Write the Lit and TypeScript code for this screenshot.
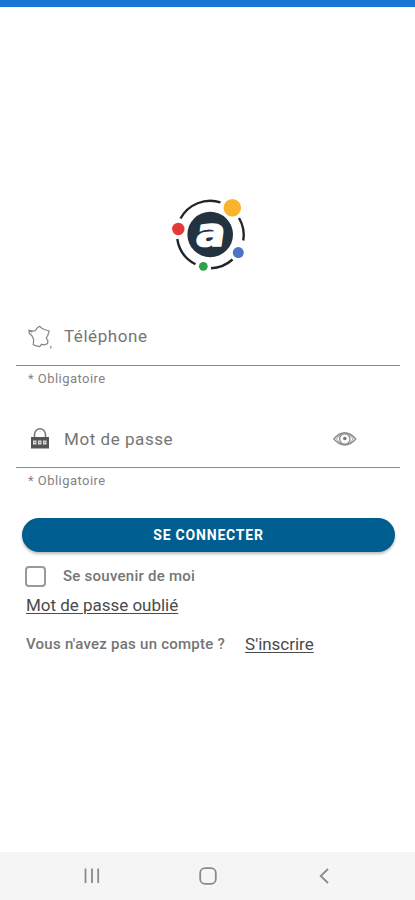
import { LitElement, html, css, svg } from "lit";
import { customElement } from "lit/decorators.js";

const logo = svg`
  <g fill="none" stroke="#22262a" stroke-width="2.4">
    <path d="M20.5 28.5A34 34 0 0 1 60.5 12.3"/>
    <path d="M79 28A34 34 0 0 1 83.3 50.5"/>
    <path d="M72.5 69.5A34 34 0 0 1 51 78.2"/>
    <path d="M35.5 74.3A34 34 0 0 1 17.3 49"/>
  </g>
  <circle cx="50.2" cy="44.5" r="22.8" fill="#22323f"/>
  <circle cx="72.3" cy="17.8" r="8.8" fill="#f8b52b"/>
  <circle cx="18.3" cy="39" r="6.2" fill="#e3393b"/>
  <circle cx="78.3" cy="62.6" r="5.5" fill="#4c74c4"/>
  <circle cx="43.3" cy="76.3" r="4.4" fill="#2ea14f"/>
  <text class="mark" transform="translate(34.6 55.8) skewX(-8) scale(1.12 1)">a</text>`;

@customElement("app-root")
export class AppRoot extends LitElement {
  static styles = css`
    :host { display: flex; flex-direction: column; height: 900px; background: #fff;
      font-family: Roboto, sans-serif; color: #757575; overflow: hidden; }
    * { box-sizing: border-box; }
    svg { display: block; flex: none; }
    .status { height: 7px; background: #1976d2; flex: none; }
    .content { flex: 1; padding: 183px 15px 0; }
    .logo { margin: 0 auto 0 145px; }
    .mark { font: bold 39px "DejaVu Sans", sans-serif; fill: #fff; stroke: #fff; stroke-width: 1.6; stroke-linejoin: miter; }
    .field { display: flex; align-items: center; height: 58px; margin-left: 1px;
      border-bottom: 1.5px solid #8c8c8c; padding: 0 42px 0 11px; }
    .first { margin-top: 28px; }
    .second { margin-top: 40px; }
    .label { margin-left: 11px; font-size: 17px; letter-spacing: .55px; flex: 1; }
    .first .label { padding-bottom: 2px; }
    .help { height: 58px; padding: 3px 0 0 13px; font-size: 13px; line-height: 19px;
      letter-spacing: .46px; color: #838383; }
    .help.tight { height: 50px; }
    .first + .help { height: 4px; }
    .button { display: flex; align-items: center; justify-content: center; width: 373px; height: 34px;
      margin-left: 7px; border: 0; border-radius: 17px; background: #005d8f; color: #fff;
      font: bold 14px Roboto, sans-serif; letter-spacing: .8px; box-shadow: 0 2px 3px #0004; }
    .check { display: flex; align-items: center; height: 22px; margin: 13px 0 0 10px; }
    .box { width: 21px; height: 21px; border: 2px solid #999; border-radius: 4px; }
    .strong { font-size: 15px; font-weight: 500; letter-spacing: .25px; }
    .check .strong { margin-left: 17px; }
    .link { font-size: 17px; letter-spacing: -.02px; color: #4a4a4a; text-decoration: underline;
      text-decoration-thickness: 1px; text-underline-offset: 2px; }
    .forgot { display: block; margin: 8px 0 0 11px; line-height: 20px; }
    .signup { display: flex; align-items: center; gap: 20px; margin: 19px 0 0 11px; line-height: 20px; }
    .nav { flex: none; height: 48px; background: #f5f5f5; }
  `;

  render() {
    return html`
      <div class="status"></div>
      <main class="content">
        <svg class="logo" width="100" height="90">${logo}</svg>
        <div class="field first">
          <svg width="26" height="26" viewBox="0 0 26 26" fill="none" stroke="#858585" stroke-width="1.2" stroke-linejoin="round">
            <path d="M2 6.300l4 .8 2.600-.6 1.200-2.300 2.700-1.900 2.400 2 2.300 1.200 5 1.500-1.500 4.500-1.500 2.500 1.700 2.600-.3 3-3 1.200-3.300-.4-1.600 2.200-3.500-.7-3-1.200.5-5.200-1.800-3.700-2.600-2.500z"/>
            <path d="M1.700 6.200l3.500 2M23.800 22v2.500"/>
          </svg>
          <span class="label">Téléphone</span>
        </div>
        <div class="help">* Obligatoire</div>
        <div class="field second">
          <svg width="26" height="26" viewBox="0 0 26 26">
            <path d="M7.5 12V8.500a5.500 5.800 0 0 1 11 0V12" fill="none" stroke="#777" stroke-width="1.500"/>
            <path d="M4 11h18v11.500H4z" fill="#555"/>
            <path d="M6 14.500h3.500v4H6zm5 0h3.500v4H11zm5 0h3.500v4H16z" fill="#ddd"/>
            <path d="M7.200 15.700h1.200v1.400H7.200zm5 0h1.200v1.400h-1.200zm5 0h1.200v1.400h-1.200z" fill="#777"/>
          </svg>
          <span class="label">Mot de passe</span>
          <svg width="26" height="20" viewBox="0 0 26 20" fill="none" stroke="#8c8c8c" stroke-width="1.300">
            <path d="M1.800 10Q12.800-2.500 23.800 10Q12.800 22 1.800 10z"/>
            <path d="M4.500 10Q7 6.500 9 5.500M4.500 10Q7 13.500 9 14.500M21 10Q19 6.500 17 5.500M21 10Q19 13.500 17 14.500" stroke-width=".8"/>
            <circle cx="12.800" cy="10" r="5.200"/><circle cx="12.800" cy="9.500" r="1.800" fill="#777" stroke="none"/>
          </svg>
        </div>
        <div class="help tight">* Obligatoire</div>
        <button class="button">SE CONNECTER</button>
        <div class="check"><span class="box"></span><span class="strong">Se souvenir de moi</span></div>
        <a class="link forgot">Mot de passe oublié</a>
        <div class="signup"><span class="strong">Vous n'avez pas un compte ?</span><a class="link">S'inscrire</a></div>
      </main>
      <svg class="nav" width="415" height="48" fill="none" stroke="#8b8b8b" stroke-width="1.8">
        <path d="M85.5 16.500v14.500M92 16.500v14.500M98.200 16.500v14.500"/>
        <rect x="200.200" y="16.200" width="15.600" height="15.600" rx="4.800"/>
        <path d="M328 17l-7.300 7 7.300 7"/>
      </svg>`;
  }
}
